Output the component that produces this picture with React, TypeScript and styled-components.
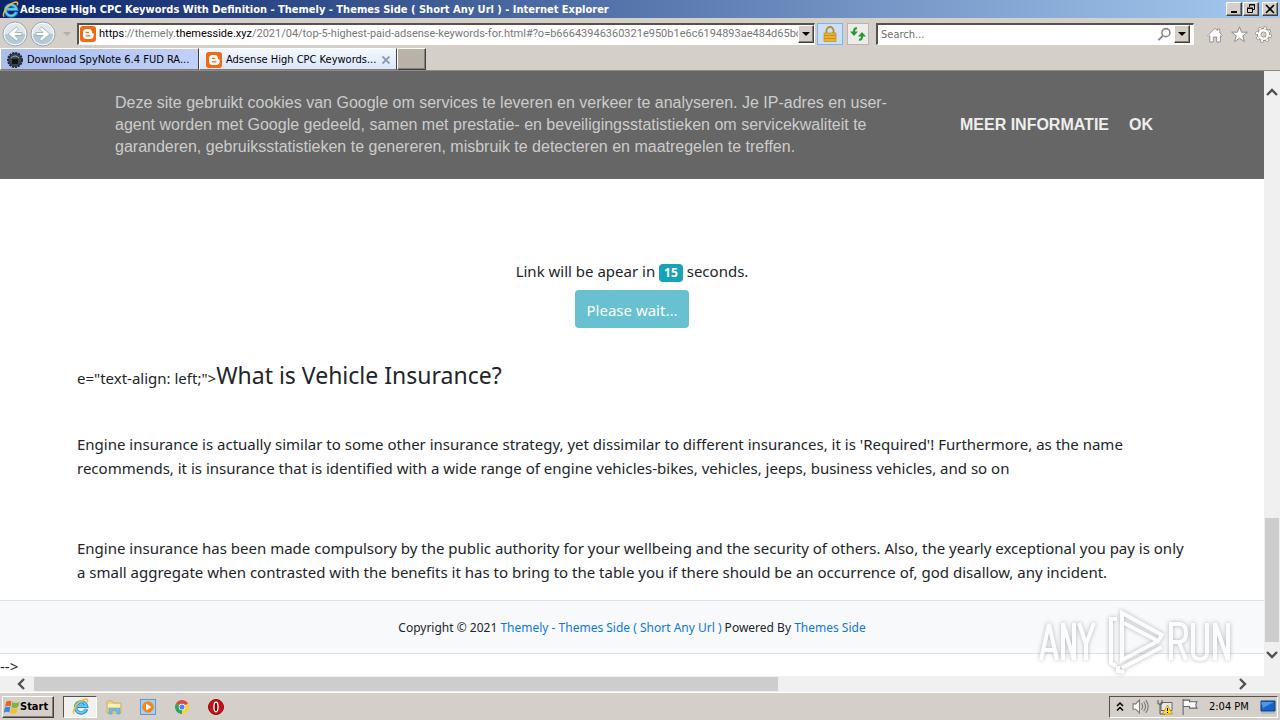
import React from "react";
import styled, { createGlobalStyle, css } from "styled-components";

const ui = `"DejaVu Sans Condensed", "Noto Sans", sans-serif`;
const face = "#d4cfc8";

const Global = createGlobalStyle`
  * { box-sizing: border-box; }
  html, body, #root { height: 100%; }
  body { margin: 0; overflow: hidden; font-family: "Noto Sans", "Open Sans", sans-serif; color: #212529; }
  button, input { font: inherit; color: inherit; padding: 0; margin: 0; border: 0; background: none; border-radius: 0; }
  svg { display: block; flex: none; }
`;

const raised = css`
  border: 1px solid;
  border-color: #fff #404040 #404040 #fff;
  box-shadow: inset -1px -1px #868078;
  background: ${face};
`;
const sunken = css`
  border: 1px solid;
  border-color: #56524c #fff #fff #56524c;
`;

const Desktop = styled.div`
  height: 100vh;
  display: flex;
  flex-direction: column;
  font-size: 11px;
  background: ${face};
`;
const TitleBar = styled.header`
  height: 18px;
  flex: none;
  display: flex;
  align-items: center;
  gap: 1px;
  padding: 0 2px;
  background: linear-gradient(90deg, #0a246a, #a6caf0);
  color: #fff;
`;
const WindowTitle = styled.h1`
  flex: 1;
  margin: 0;
  padding-top: 1px;
  font: bold 11px/18px ${ui};
  white-space: nowrap;
`;
const WindowButton = styled.button<{ $apart?: boolean }>`
  ${raised}
  width: 16px;
  height: 14px;
  margin-left: ${(p) => (p.$apart ? 2 : 0)}px;
  display: grid;
  place-items: center;
`;
const NavBar = styled.div`
  height: 29px;
  flex: none;
  display: flex;
  align-items: center;
  padding: 2px 5px 0 1px;
  font-family: ${ui};
`;
const IconButton = styled.button<{ $narrow?: boolean }>`
  width: ${(p) => (p.$narrow ? 20 : 24)}px;
  height: 24px;
  display: grid;
  place-items: center;
`;
const NavButton = styled(IconButton)`
  width: 28px;
  height: 26px;
`;
const Field = styled.div<{ $search?: boolean }>`
  ${sunken}
  border-width: 2px 1px 1px 2px;
  height: 22px;
  display: flex;
  align-items: center;
  padding-left: ${(p) => (p.$search ? 3 : 1)}px;
  background: #fff;
  ${(p) => (p.$search ? "width: 318px; flex: none; padding-right: 3px;" : "flex: 1; min-width: 0;")}
`;
const Address = styled.div`
  flex: 1;
  min-width: 0;
  margin-left: 3px;
  overflow: hidden;
  white-space: nowrap;
  font-family: Roboto, "Noto Sans", sans-serif;
  line-height: 16px;
  color: #777;
  b { font-weight: normal; color: #000; }
`;
const SearchInput = styled.input`
  flex: 1;
  min-width: 0;
  outline: 0;
  &::placeholder { color: #6d6d6d; opacity: 1; }
`;
const DropButton = styled.button`
  ${raised}
  width: 16px;
  height: 18px;
  display: grid;
  place-items: center;
`;
const BoxButton = styled.button<{ $active?: boolean }>`
  width: ${(p) => (p.$active ? 26 : 22)}px;
  height: 22px;
  margin-left: ${(p) => (p.$active ? 2 : 4)}px;
  display: grid;
  place-items: center;
  border: 1px solid ${(p) => (p.$active ? "#7eb4ea" : "#b9b5ae")};
  background: ${(p) => (p.$active ? "#c9e0f7" : "#eeecea")};
`;
const SearchBox = styled.form`
  display: flex;
  margin-left: 7px;
`;
const Tools = styled.div`
  display: flex;
  padding-top: 2px;
  margin-left: 9px;
`;
const TabBar = styled.nav`
  height: 24px;
  flex: none;
  display: flex;
  align-items: flex-start;
  padding-top: 1px;
  border-bottom: 1px solid #8d8983;
  font-family: ${ui};
`;
const Tab = styled.button<{ $active?: boolean }>`
  height: 22px;
  width: ${(p) => (p.$active ? 198 : 199)}px;
  display: flex;
  align-items: center;
  gap: 4px;
  padding: 1px 6px 0;
  border: 1px solid;
  border-color: #fff #404040 #7f7b75 #fff;
  background: ${(p) => (p.$active ? "linear-gradient(#f4f8fe, #d9e5fa)" : "linear-gradient(90deg, #a9bdf0, #c1d0f8)")};
  color: #000;
  white-space: nowrap;
`;
const TabTitle = styled.span`
  flex: 1;
  text-align: left;
`;
const NewTab = styled.button`
  ${raised}
  width: 29px;
  height: 22px;
  background: #b9b2a9;
`;
const Viewport = styled.div`
  flex: 1;
  min-height: 0;
  display: flex;
`;
const Page = styled.main`
  flex: 1;
  min-width: 0;
  background: #fff;
  overflow: hidden;
  font-size: 15px;
  line-height: 24px;
`;
const CookieBar = styled.section`
  height: 108px;
  display: flex;
  align-items: center;
  padding: 0 111px 0 115px;
  background: #666;
  font-family: "Liberation Sans", Arial, sans-serif;
  font-size: 16px;
  line-height: 22px;
`;
const CookieText = styled.p`
  flex: 1;
  margin: 0;
  color: #ccc;
`;
const CookieLink = styled.a`
  margin-left: 20px;
  font-weight: bold;
  color: #eee;
  text-decoration: none;
`;
const CookieButton = styled.button`
  && {
    margin-left: 20px;
    font-weight: bold;
    color: #eee;
  }
`;
const Wait = styled.section`
  padding-top: 80px;
  display: flex;
  flex-direction: column;
  align-items: center;
  gap: 7px;
`;
const Count = styled.span`
  display: inline-block;
  padding: 0 5px;
  border-radius: 4px;
  background: #17a2b8;
  color: #fff;
  font-weight: bold;
  font-size: 12px;
  line-height: 18px;
`;
const WaitButton = styled.button`
  height: 38px;
  padding: 2px 12px 0;
  border-radius: 4px;
  background: #67c1d0;
  color: #fff;
`;
const Article = styled.article`
  padding: 33px 77px 0;
  p { margin: 0; white-space: nowrap; }
`;
const Heading = styled.div`
  line-height: 29px;
  margin-bottom: 39px;
  h2 { display: inline; margin: 0; font-weight: normal; font-size: 23px; }
`;
const Gap = styled.div`
  height: 56px;
`;
const Footer = styled.footer`
  height: 54px;
  margin-top: 16px;
  border: solid #dfe1e3;
  border-width: 1px 0;
  background: #f7f9fa;
  text-align: center;
  font-size: 12px;
  line-height: 53px;
  a { color: #1177dd; text-decoration: none; }
`;
const VScroll = styled.div`
  width: 16px;
  display: flex;
  flex-direction: column;
  align-items: center;
  padding: 14px 0 13px;
  background: #f0f0f0;
`;
const ScrollButton = styled.button`
  width: 16px;
  height: 16px;
  flex: none;
  display: grid;
  place-items: center;
`;
const VTrack = styled.div`
  flex: 1;
  width: 100%;
  display: flex;
  flex-direction: column;
  justify-content: flex-end;
  padding: 0 1px 5px;
  &::after { content: ""; height: 23%; background: #cdcdcd; }
`;
const HScroll = styled.div`
  height: 16px;
  flex: none;
  display: flex;
  align-items: center;
  padding: 0 30px 0 14px;
  background: #f0f0f0;
`;
const HTrack = styled.div`
  flex: 1;
  height: 100%;
  padding: 1px 0 0 4px;
  &::after { content: ""; display: block; width: 62%; height: 14px; background: #cdcdcd; }
`;
const Watermark = styled.div`
  position: absolute;
  right: 46px;
  bottom: 46px;
  filter: drop-shadow(0 0 2px #888);
  opacity: 0.6;
`;
const Taskbar = styled.footer`
  height: 28px;
  flex: none;
  display: flex;
  align-items: center;
  padding: 0 2px;
  border-top: 1px solid #fff;
  font-family: ${ui};
  color: #000;
`;
const StartButton = styled.button`
  ${raised}
  width: 52px;
  height: 22px;
  display: flex;
  align-items: center;
  padding-left: 1px;
  && { font-weight: bold; margin-right: 9px; }
`;
const TaskButton = styled.button<{ $active?: boolean }>`
  width: 34px;
  height: 22px;
  display: grid;
  place-items: center;
  ${(p) => p.$active && css`${sunken} background: #f3f1ee;`}
`;
const Tray = styled.div`
  ${sunken}
  height: 22px;
  margin-left: auto;
  display: flex;
  align-items: center;
  gap: 8px;
  padding: 0 1px 0 6px;
`;

const Svg = ({ s, h, box = "0 0 16 16", children }: { s: number; h?: number; box?: string; children: React.ReactNode }) => (
  <svg width={s} height={h ?? s} viewBox={box} fill="none" aria-hidden="true">{children}</svg>
);
const IE = ({ s }: { s: number }) => (
  <Svg s={s}>
    <path d="M13.6 10.3A5.2 5.2 0 1 1 13.7 7.8H4.500" stroke="#238fd8" strokeWidth="3.2" />
    <path d="M13.3 10.6A5.2 5.2 0 1 1 13.6 7.700H5" stroke="#6bcaf6" strokeWidth="1.6" />
    <path d="M2 14.8C-.6 12 5.8 2.7 12 1.2c2.7-.7 3.2.9 2.3 2.8" stroke="#f2bd2c" strokeWidth="1.4" />
  </Svg>
);
const Blogger = () => (
  <Svg s={16}>
    <rect width="16" height="16" rx="3" fill="#f06a16" />
    <path d="M6.3 3h2.5c2 0 3.2 1.4 3.2 3.2 0 .8.2 1 .9 1 .5 0 .8.3.8.9v1.4c0 2.1-1.4 3.5-3.5 3.5H6.3C4.3 13 3 11.600 3 9.600V6.300C3 4.300 4.300 3 6.300 3Z" fill="#fff" />
    <path d="M6.300 6.300h2.300M6.300 9.800h3.800" stroke="#f06a16" strokeWidth="1.300" strokeLinecap="round" />
  </Svg>
);
const Round = ({ back }: { back?: boolean }) => (
  <Svg s={26} box="0 0 26 26">
    <circle cx="13" cy="13" r="12" fill="#dfe7ed" stroke="#9ba6ae" />
    <path d="M2 13a11 11 0 0 0 22 0Z" fill="#b3c9d6" />
    <circle cx="13" cy="13" r="10.800" stroke="#f8fbfd" />
    <path d={back ? "M20 11.500h-7l3.500-3.500-2-2L6 13l8.500 7 2-2-3.500-3.500h7Z" : "M6 11.500h7L9.500 8l2-2 8.500 7-8.500 7-2-2 3.500-3.500H6Z"} fill="#fff" stroke="#93a8b5" strokeWidth=".8" />
  </Svg>
);
const Down = ({ color = "#000" }: { color?: string }) => (
  <Svg s={8} h={4} box="0 0 8 4"><path d="M0 0h8L4 4Z" fill={color} /></Svg>
);
const Chevron = ({ d }: { d: string }) => (
  <Svg s={12} box="0 0 12 12"><path d={d} stroke="#505050" strokeWidth="2.400" /></Svg>
);

export default function App() {
  return (
    <Desktop>
      <Global />
      <TitleBar>
        <IE s={17} />
        <WindowTitle>Adsense High CPC Keywords With Definition - Themely - Themes Side ( Short Any Url ) - Internet Explorer</WindowTitle>
        <WindowButton aria-label="Minimize"><Svg s={10} box="0 0 10 10"><path d="M2 8h6" stroke="#000" strokeWidth="2" /></Svg></WindowButton>
        <WindowButton aria-label="Restore"><Svg s={10} box="0 0 10 10"><path d="M3.500 3V.500h5v5H7M3 1h6M1.500 4.500h5v4h-5zM1 4h6" stroke="#000" /></Svg></WindowButton>
        <WindowButton $apart aria-label="Close"><Svg s={10} box="0 0 10 10"><path d="m1 1 8 8M9 1 1 9" stroke="#000" strokeWidth="1.600" /></Svg></WindowButton>
      </TitleBar>
      <NavBar>
        <NavButton aria-label="Back"><Round back /></NavButton>
        <NavButton aria-label="Forward"><Round /></NavButton>
        <IconButton $narrow aria-label="Recent pages"><Down color="#b3aea7" /></IconButton>
        <Field>
          <Blogger />
          <Address><b>https</b>://themely.<b>themesside.xyz</b>/2021/04/top-5-highest-paid-adsense-keywords-for.html#?o=b66643946360321e950b1e6c6194893ae484d65bc</Address>
          <DropButton aria-label="Show addresses"><Down /></DropButton>
        </Field>
        <BoxButton $active aria-label="Security report">
          <Svg s={16}><path d="M4.500 7V4.500a3.500 3.500 0 0 1 7 0V7" stroke="#b98a28" strokeWidth="1.800" /><rect x="2" y="7" width="12" height="8.500" fill="#eab52d" stroke="#b98014" strokeWidth=".6" /><path d="M2 9.500h12M2 12.500h12" stroke="#c98f1b" /></Svg>
        </BoxButton>
        <BoxButton aria-label="Refresh">
          <Svg s={18} box="0 0 18 18"><path d="M8 3.500c-2-.5-3 .5-3 3.500M10 14.500c2 .5 3-.5 3-3.500" stroke="#269a35" strokeWidth="2.200" /><path d="M1 6.500h8l-4 4.500ZM9 11.500h8L13 7Z" fill="#269a35" /></Svg>
        </BoxButton>
        <SearchBox>
          <Field $search>
            <SearchInput aria-label="Search" placeholder="Search..." />
            <IconButton $narrow type="button" aria-label="Go"><Svg s={15}><circle cx="9.500" cy="6" r="4.300" stroke="#888" strokeWidth="1.700" /><path d="m6.500 9-5 5" stroke="#888" strokeWidth="2" /></Svg></IconButton>
            <DropButton type="button" aria-label="Search options"><Down /></DropButton>
          </Field>
        </SearchBox>
        <Tools>
          <IconButton aria-label="Home"><Svg s={16}><path d="M.8 8.500 8 1.200l2.500 2.500V2h2.300v4l2.600 2.500-1 1-1-.8V15H9.700v-5H6.300v5H2.800V8.700l-1 .8Z" fill="#fff" stroke="#8d8983" strokeWidth=".9" /></Svg></IconButton>
          <IconButton aria-label="Favorites"><Svg s={17}><path d="m8 .8 1.900 5h5.500l-4.300 3.400 1.500 5.500L8 11.500l-4.600 3.200 1.500-5.500L.6 5.800h5.500Z" fill="#fff" stroke="#8d8983" strokeWidth=".9" /></Svg></IconButton>
          <IconButton aria-label="Tools"><Svg s={17}><circle cx="8" cy="8" r="6.300" stroke="#8d8983" strokeWidth="3" strokeDasharray="2.700 2.250" /><circle cx="8" cy="8" r="4.200" stroke="#8d8983" strokeWidth="4" /><circle cx="8" cy="8" r="6.200" stroke="#fff" strokeWidth="1.800" strokeDasharray="1.900 2.970" strokeDashoffset="-.4" /><circle cx="8" cy="8" r="4" stroke="#fff" strokeWidth="2.500" /></Svg></IconButton>
        </Tools>
      </NavBar>
      <TabBar>
        <Tab><Svg s={16}><circle cx="8" cy="8" r="7" fill="#39434c" stroke="#202830" strokeDasharray="2 1" strokeWidth="2" /><path d="M4 6a5 5 0 0 1 8 0" stroke="#9aaab6" /><rect x="5" y="7" width="6" height="5" fill="#0d151b" /></Svg><TabTitle>Download SpyNote 6.4 FUD RA...</TabTitle></Tab>
        <Tab $active><Blogger /><TabTitle>Adsense High CPC Keywords...</TabTitle><Svg s={8} box="0 0 8 8"><path d="m.5.5 7 7m0-7-7 7" stroke="#8b97a6" strokeWidth="1.800" /></Svg></Tab>
        <NewTab aria-label="New tab" />
      </TabBar>
      <Viewport>
        <Page>
          <CookieBar>
            <CookieText>Deze site gebruikt cookies van Google om services te leveren en verkeer te analyseren. Je IP-adres en user-<br />agent worden met Google gedeeld, samen met prestatie- en beveiligingsstatistieken om servicekwaliteit te<br />garanderen, gebruiksstatistieken te genereren, misbruik te detecteren en maatregelen te treffen.</CookieText>
            <CookieLink href="#info">MEER INFORMATIE</CookieLink>
            <CookieButton>OK</CookieButton>
          </CookieBar>
          <Wait>
            <span>Link will be apear in <Count>15</Count> seconds.</span>
            <WaitButton>Please wait...</WaitButton>
          </Wait>
          <Article>
            <Heading>e="text-align: left;"&gt;<h2>What is Vehicle Insurance?</h2></Heading>
            <p>Engine insurance is actually similar to some other insurance strategy, yet dissimilar to different insurances, it is 'Required'! Furthermore, as the name<br />recommends, it is insurance that is identified with a wide range of engine vehicles-bikes, vehicles, jeeps, business vehicles, and so on</p>
            <Gap />
            <p>Engine insurance has been made compulsory by the public authority for your wellbeing and the security of others. Also, the yearly exceptional you pay is only<br />a small aggregate when contrasted with the benefits it has to bring to the table you if there should be an occurrence of, god disallow, any incident.</p>
          </Article>
          <Footer>Copyright © 2021 <a href="#home">Themely - Themes Side ( Short Any Url )</a> Powered By <a href="#themes">Themes Side</a></Footer>
          --&gt;
        </Page>
        <VScroll>
          <ScrollButton aria-label="Scroll up"><Chevron d="m1 8 5-5 5 5" /></ScrollButton>
          <VTrack />
          <ScrollButton aria-label="Scroll down"><Chevron d="m1 3 5 5 5-5" /></ScrollButton>
        </VScroll>
      </Viewport>
      <HScroll>
        <ScrollButton aria-label="Scroll left"><Chevron d="M8 1 3 6l5 5" /></ScrollButton>
        <HTrack />
        <ScrollButton aria-label="Scroll right"><Chevron d="m4 1 5 5-5 5" /></ScrollButton>
      </HScroll>
      <Taskbar>
        <StartButton>
          <Svg s={16}><path d="M2 3q3-2 5.500-.500L6.500 7.500Q4 6 1 8Z" fill="#e8622a" /><path d="M8.300 3q3 2 7 0l-1.300 5q-4 2-6.700 0Z" fill="#78b83a" /><path d="M.8 8.800q3-2 5.500-.300l-1 5Q3 12-.3 13.800Z" fill="#3a86d8" /><path d="M7.200 8.800q3 2 6.600 0l-1.300 5q-3.500 2-6.300 0Z" fill="#f6bf2b" /></Svg>
          Start
        </StartButton>
        <TaskButton $active aria-label="Internet Explorer"><IE s={17} /></TaskButton>
        <TaskButton aria-label="Explorer"><Svg s={16}><path d="M1 2h5l1 2h8v10H1Z" fill="#f0d67c" stroke="#bda252" strokeWidth=".6" /><path d="M2 5h12v3H2Z" fill="#f9efb9" /><path d="M3 15V9.500h11V15h-3v-3H6v3Z" fill="#73bde6" stroke="#4a93c4" strokeWidth=".5" /></Svg></TaskButton>
        <TaskButton aria-label="Media Player"><Svg s={16}><rect x=".5" y=".5" width="15" height="15" fill="#a9cfed" stroke="#5b9bce" /><circle cx="8" cy="8" r="5.800" fill="#f0871c" /><path d="M6 4.500 11.500 8 6 11.500Z" fill="#fff" /></Svg></TaskButton>
        <TaskButton aria-label="Chrome"><Svg s={14}><path d="M8 8 1.100 4A8 8 0 0 1 14.900 4Z" fill="#dd4b3e" /><path d="M8 8 14.900 4A8 8 0 0 1 8 16Z" fill="#fbd03b" /><path d="M8 8v8A8 8 0 0 1 1.100 4Z" fill="#2fa35a" /><circle cx="8" cy="8" r="3.700" fill="#fff" /><circle cx="8" cy="8" r="2.900" fill="#4285f4" /></Svg></TaskButton>
        <TaskButton aria-label="Opera"><Svg s={16}><circle cx="8" cy="8" r="7.500" fill="#c2121c" stroke="#8f0a12" /><ellipse cx="8" cy="8" rx="2" ry="4.800" fill="#7e060b" stroke="#fff" strokeWidth="1.300" /></Svg></TaskButton>
        <Tray>
          <Svg s={8} h={10} box="0 0 8 10"><path d="m1 4 3-3 3 3M1 8.500l3-3 3 3" stroke="#000" strokeWidth="1.500" /></Svg>
          <Svg s={17}><path d="M1 5.500h2.500L7 2v12l-3.500-3.500H1Z" fill="#fff" stroke="#777" /><path d="M9 5q2 3 0 6M11 3.500q3.500 4.500 0 9M13 2q4.500 6 0 12" stroke="#777" /></Svg>
          <Svg s={16}><path d="M4 3.500h11v8H4z" fill="#e7e7e7" stroke="#666" /><path d="M1 1v4h4V1M3 5v10h5" stroke="#555" /><path d="m10.500 6 5 9h-10Z" fill="#ffd92e" stroke="#b69012" strokeWidth=".7" /><path d="M10.500 9v3m0 1v1" stroke="#000" /></Svg>
          <Svg s={17}><path d="M2 1v15M2 2h6v1.500h7q-2 3 0 6H8V8H2" fill="#fff" stroke="#666" /></Svg>
          <span>&nbsp;2:04 PM&nbsp;</span>
          <Svg s={16}><path d="M1 2h14v10H1z" fill="#1764c6" stroke="#0d3b7a" /><path d="M1 3h13L3 9Z" fill="#4d98e8" /><path d="M1 14h14" stroke="#8ea6c2" /></Svg>
        </Tray>
      </Taskbar>
      <Watermark>
        <Svg s={196} h={66} box="0 0 196 66">
          <g stroke="#fff" strokeWidth="4">
            <path d="m3 52 8-36 8 36M6 42h10M25 52V15l11 37V15M41 15l7 21 8-21M48 36v16" />
            <path d="M79 11h-6v44l5 3M84 38V5l40 22-4 6-34-18M84 18v34l36-19M84 60l40-21M80 58v5l6 1" />
            <path d="M133 52V16h8q7 0 7 9t-7 9h-8M141 34l7 18M155 15v29q0 7 7 7t7-7V15M177 52V15l13 37V15" />
          </g>
        </Svg>
      </Watermark>
    </Desktop>
  );
}
